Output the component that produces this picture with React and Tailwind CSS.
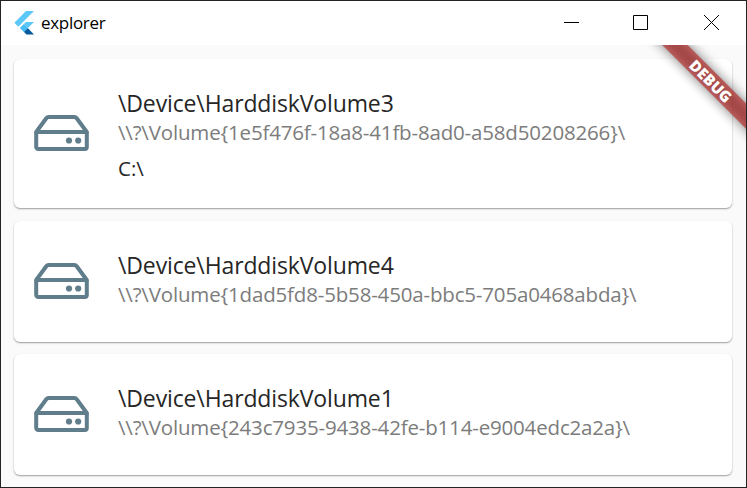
function FlutterLogo() {
  return (
    <svg className="h-6 w-5 shrink-0" viewBox="0 0 20 24">
      <path d="M12 0h8L4.3 15.7.4 11.7z" fill="#5cc8f8" />
      <path d="M12 11h8l-6.1 6.1-4-4z" fill="#5cc8f8" />
      <path d="M9.8 20.8l3.9-3.8L20 23.6H12.4z" fill="#075b9d" />
      <path d="M5.9 17.1l4-4 4 4-4 3.9z" fill="#48bdf5" />
    </svg>
  );
}

function DriveIcon() {
  return (
    <svg className="relative -top-px h-9 w-[55px] shrink-0" viewBox="0 0 55 36" fill="none" stroke="#607d8b" strokeWidth="4">
      <path d="M2.2 17V32a2 2 0 0 0 2 2H50.8a2 2 0 0 0 2-2V17" />
      <path d="M2.2 17L12.3 3.2Q13.2 2 14.6 2H40.4Q41.8 2 42.7 3.2L52.8 17Z" strokeLinejoin="round" />
      <circle cx="35" cy="25.5" r="3.1" fill="#607d8b" stroke="none" />
      <circle cx="44.2" cy="25.5" r="3.1" fill="#607d8b" stroke="none" />
    </svg>
  );
}

const volumes = [
  {
    device: "\\Device\\HarddiskVolume3",
    guid: "\\\\?\\Volume{1e5f476f-18a8-41fb-8ad0-a58d50208266}\\",
    mount: "C:\\",
    height: "h-[149px] mb-px",
    nudge: "pt-[3px]",
  },
  {
    device: "\\Device\\HarddiskVolume4",
    guid: "\\\\?\\Volume{1dad5fd8-5b58-450a-bbc5-705a0468abda}\\",
    height: "h-[121px]",
    nudge: "pb-1",
  },
  {
    device: "\\Device\\HarddiskVolume1",
    guid: "\\\\?\\Volume{243c7935-9438-42fe-b114-e9004edc2a2a}\\",
    height: "h-[121px]",
    nudge: "pb-1",
  },
];

function VolumeCard({ device, guid, mount, height, nudge }) {
  return (
    <div
      className={`flex items-center rounded-md bg-white pl-5 shadow-[0_1px_2px_rgba(0,0,0,0.28),0_1px_1px_rgba(0,0,0,0.12)] ${height}`}
    >
      <DriveIcon />
      <div className={`ml-[29px] whitespace-nowrap ${nudge}`}>
        <div className="h-[29px] text-[23px] leading-[29px] tracking-[-0.13px] text-[#262626]">{device}</div>
        <div className="h-7 text-[20.5px] leading-7 tracking-[-0.17px] text-[#7c7c7c]">{guid}</div>
        {mount && <div className="mt-2 h-7 text-[20.5px] leading-7 text-[#262626]">{mount}</div>}
      </div>
    </div>
  );
}

function DebugBanner() {
  return (
    <div className="pointer-events-none absolute inset-0 overflow-hidden">
      <div className="absolute top-[28px] left-[621px] h-[18px] w-[180px] rotate-45 bg-black/50 blur-[6px]" />
      <div className="absolute top-[28px] left-[621px] flex h-[18px] w-[180px] rotate-45 items-center justify-center bg-[#b71c1c]/60 pr-[3px] text-[15.3px] leading-[18px] font-extrabold text-white">
        DEBUG
      </div>
    </div>
  );
}

export default function App() {
  return (
    <div className="flex h-[488px] w-[747px] flex-col border border-[#232323] bg-[#fafafa] font-['Open_Sans','Noto_Sans',sans-serif]">
      <header className="flex h-11 shrink-0 items-center bg-white pl-[13px]">
        <FlutterLogo />
        <span className="ml-[7px] text-[17px] leading-6 tracking-[-0.3px] text-black">explorer</span>
        <div className="ml-auto flex pr-[27px] pb-0.5">
          <svg className="h-4 w-[155px]" viewBox="0 0 155 16" fill="none" stroke="#000" strokeWidth="1">
            <path d="M0 8.5H15" />
            <path d="M69.5 1.5H83.5V15.5H69.5z" />
            <path d="M140 1L155 16M155 1L140 16" />
          </svg>
        </div>
      </header>
      <main className="relative flex grow flex-col gap-3 pt-3.5 pr-3.5 pl-[13px]">
        {volumes.map((v) => (
          <VolumeCard key={v.device} {...v} />
        ))}
        <DebugBanner />
      </main>
    </div>
  );
}
